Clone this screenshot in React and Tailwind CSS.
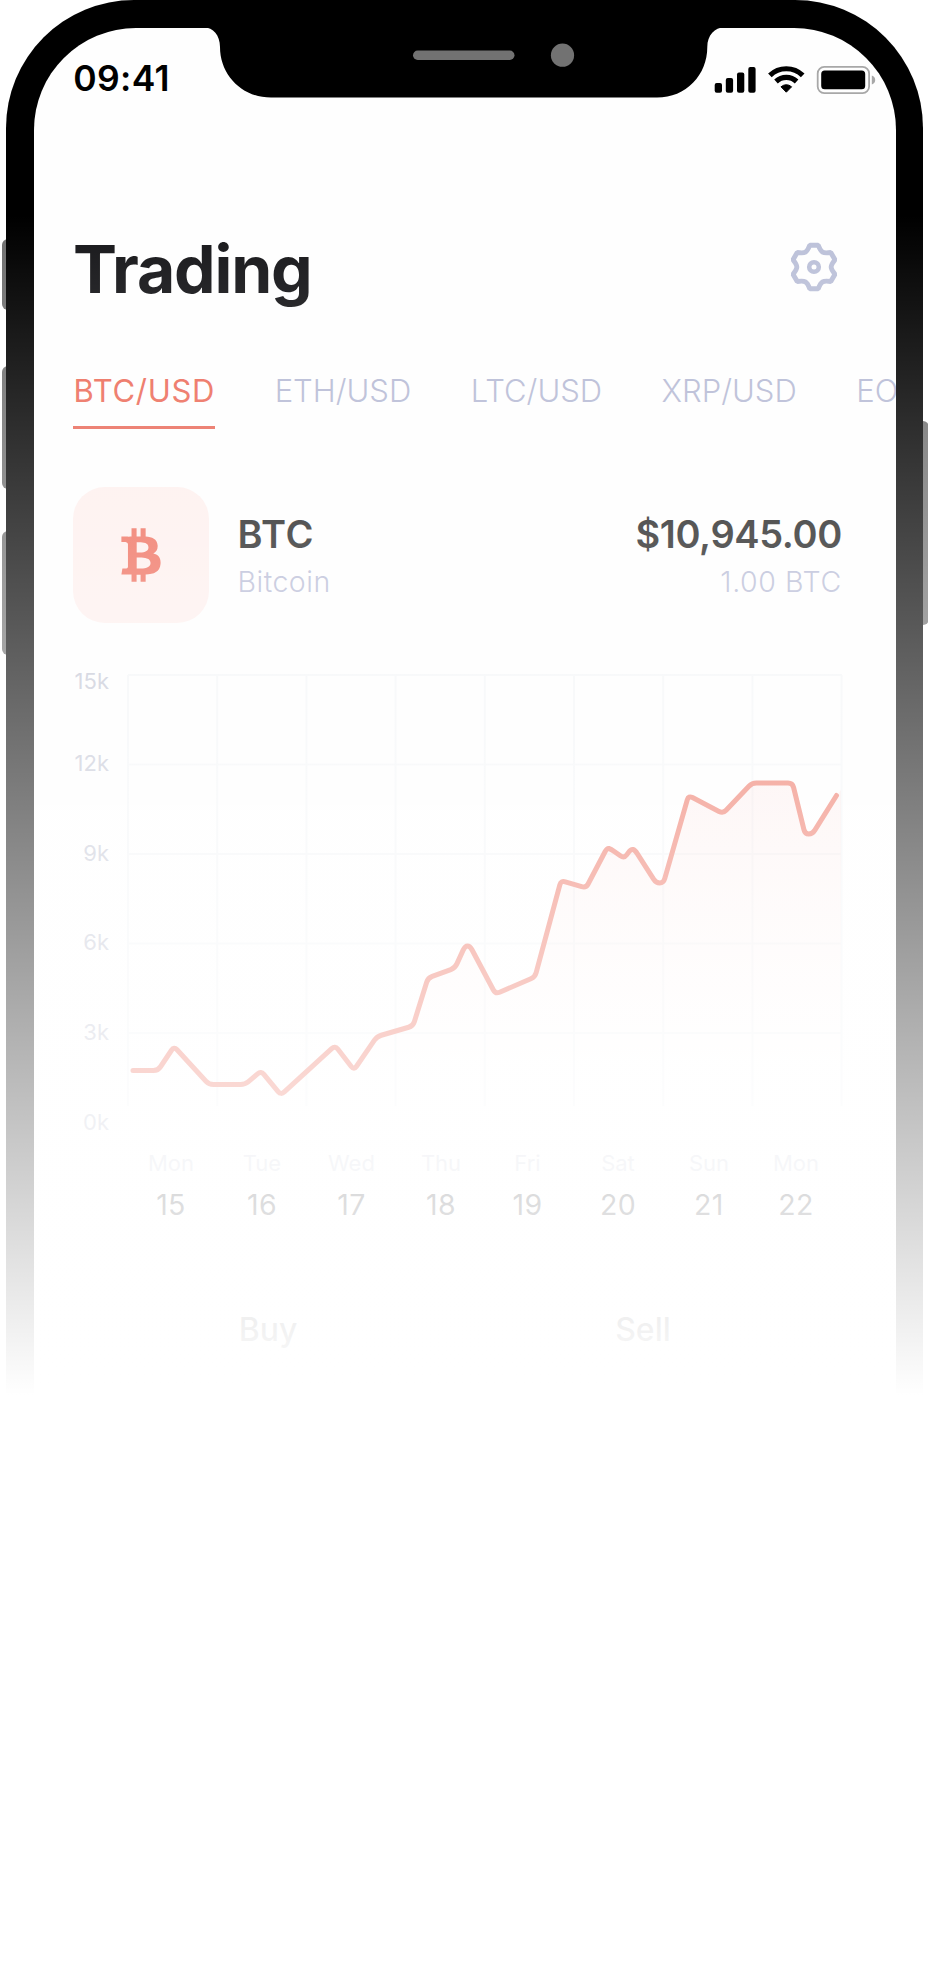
import { FaBtc } from 'react-icons/fa';

const pairs = ['BTC/USD', 'ETH/USD', 'LTC/USD', 'XRP/USD', 'EOS/USD'];

const priceLabels = ['15k', '12k', '9k', '6k', '3k', '0k'];

const days = [
  { name: 'Mon', date: 15 },
  { name: 'Tue', date: 16 },
  { name: 'Wed', date: 17 },
  { name: 'Thu', date: 18 },
  { name: 'Fri', date: 19 },
  { name: 'Sat', date: 20 },
  { name: 'Sun', date: 21 },
  { name: 'Mon', date: 22 }
];

// Price curve, in chart units
const points = [
  [6, 404.5], [31, 404.5], [47, 380.5], [82, 418.5], [118, 418.5], [134, 405],
  [154, 429], [208, 379.5], [227, 404], [250, 370.5], [286, 360], [301, 312],
  [328, 302], [338, 280], [343, 280], [368.5, 328], [408, 311], [434, 214.5],
  [459, 222], [480, 182], [484, 183], [497, 192.5], [504, 183], [508, 184],
  [529, 217], [536.5, 217], [561.5, 129.5], [596, 147.5], [625, 117], [665.5, 117],
  [678, 168], [685.5, 168], [709.5, 129.5]
];

// Line through the points with softened corners
function roundedPath(pts, radius) {
  let d = `M${pts[0][0]} ${pts[0][1]}`;
  for (let i = 1; i < pts.length - 1; i++) {
    const [x, y] = pts[i];
    const toward = ([px, py]) => {
      const len = Math.hypot(px - x, py - y);
      const k = Math.min(radius, len / 2) / len;
      return `${(x + (px - x) * k).toFixed(2)} ${(y + (py - y) * k).toFixed(2)}`;
    };
    d += ` L${toward(pts[i - 1])} Q${x} ${y} ${toward(pts[i + 1])}`;
  }
  const last = pts[pts.length - 1];
  return `${d} L${last[0]} ${last[1]}`;
}

const linePath = roundedPath(points, 4.5);

function StatusIcons() {
  return (
    <svg width="162" height="28" viewBox="0 0 162 28" fill="none">
      <g fill="#000">
        <rect x="0.7" y="17" width="7.3" height="9.8" rx="2" />
        <rect x="11.8" y="12" width="7.3" height="14.8" rx="2" />
        <rect x="23" y="6.5" width="7.3" height="20.3" rx="2" />
        <rect x="34.3" y="1" width="7.3" height="25.8" rx="2" />
        <path d="M67 20.8 Q72.3 16.6 77.6 20.8 L72.3 26.2 Z" stroke="#000" strokeWidth="1" strokeLinejoin="round" />
      </g>
      <g stroke="#000" strokeWidth="5.2">
        <path d="M55.9 9.4 A23.6 23.6 0 0 1 88.7 9.4" />
        <path d="M62 15.5 A15 15 0 0 1 82.6 15.5" />
      </g>
      <rect x="103.7" y="0.9" width="51.4" height="26.2" rx="6.5" stroke="#a8a8a8" strokeWidth="1.8" />
      <rect x="107.2" y="4.5" width="44" height="18.8" rx="3.5" fill="#000" />
      <path d="M157.8 9.5 Q161.2 10.8 161.2 14 Q161.2 17.2 157.8 18.5 Z" fill="#a8a8a8" />
    </svg>
  );
}

// Six flat teeth joined by scooped valleys
function GearIcon() {
  const rotate = (x, y, deg) => {
    const a = (deg * Math.PI) / 180;
    return `${(x * Math.cos(a) - y * Math.sin(a)).toFixed(2)} ${(x * Math.sin(a) + y * Math.cos(a)).toFixed(2)}`;
  };
  let d = '';
  for (let i = 0; i < 6; i++) {
    const deg = i * 60;
    d += `${i ? 'L' : 'M'}${rotate(-4.2, -21.8, deg)} L${rotate(4.2, -21.8, deg)} `;
    d += `C${rotate(7.2, -14.2, deg)} ${rotate(-7.2, -14.2, deg + 60)} ${rotate(-4.2, -21.8, deg + 60)} `;
  }
  return (
    <svg width="50" height="50" viewBox="-25 -25 50 50" fill="none" stroke="#bcc1d9">
      <path d={`${d}Z`} strokeWidth="4.9" strokeLinejoin="bevel" />
      <circle r="4.8" strokeWidth="4.6" />
    </svg>
  );
}

function Notch() {
  return (
    <svg
      className="absolute top-0 left-[204px]"
      width="520"
      height="98"
      viewBox="204 0 520 98"
    >
      <path
        d="M204 0 H724 V27.5 C715 27.5 707.3 35 707.3 47 C707.3 75 686 97.6 657 97.6 H271 C242 97.6 220 75 220 47 C220 35 213 27.5 204 27.5 Z"
        fill="#000"
      />
      <rect x="413" y="50.5" width="101.5" height="9.5" rx="4.7" fill="#727272" />
      <circle cx="562.5" cy="55.2" r="11.6" fill="#727272" />
    </svg>
  );
}

function Chart() {
  return (
    <svg width="720" height="460" viewBox="0 0 720 460" fill="none">
      <defs>
        <linearGradient id="area" x1="0" y1="117" x2="0" y2="400" gradientUnits="userSpaceOnUse">
          <stop offset="0" stopColor="#f06a60" stopOpacity="0.1" />
          <stop offset="1" stopColor="#f06a60" stopOpacity="0" />
        </linearGradient>
      </defs>
      <g stroke="#f3f5f7" strokeWidth="2">
        {Array.from({ length: 9 }, (_, i) => (
          <path key={i} d={`M${1 + i * 89.2} 9 V440`} />
        ))}
        {Array.from({ length: 5 }, (_, i) => (
          <path key={i} d={`M1 ${9 + i * 89.5} H715`} />
        ))}
      </g>
      <path d={`${linePath} L714 124 V457 H6 Z`} fill="url(#area)" />
      <path d={linePath} stroke="#ec6a58" strokeWidth="5" strokeLinecap="round" strokeLinejoin="round" />
    </svg>
  );
}

export default function App() {
  return (
    <div className="relative w-[928px] h-[1988px] overflow-hidden bg-white font-['Inter',sans-serif]">
      {/* Hardware buttons */}
      <div className="absolute left-[1.5px] top-[239px] w-3 h-[71px] rounded-l-md bg-[#707070]" />
      <div className="absolute left-[1.5px] top-[366px] w-3 h-[123px] rounded-l-md bg-[#707070]" />
      <div className="absolute left-[1.5px] top-[531px] w-3 h-[124px] rounded-l-md bg-[#707070]" />
      <div className="absolute left-[917px] top-[421px] w-3 h-[204px] rounded-r-md bg-[#707070]" />

      {/* Phone body */}
      <div className="relative ml-[6.3px] w-[917px] h-full px-[27.5px] pt-[27.5px] rounded-t-[128px] bg-black">
        <div className="flex flex-col h-full overflow-hidden rounded-t-[102px] bg-[#fefefe]">
          <div className="flex justify-between shrink-0 h-[205.5px] pt-[31.5px] pl-[39.5px] pr-[20px]">
            <span className="text-[35.5px] leading-[40px] font-semibold tracking-[0.3px] text-black">09:41</span>
            <div className="pt-[6.5px]">
              <StatusIcons />
            </div>
          </div>

          <div className="flex flex-col pl-[39.2px] pr-[54px]">
            <div className="flex items-center justify-between h-[72px]">
              <h1 className="text-[66px] leading-[72px] font-bold tracking-[-0.018em] text-[#17171a]">Trading</h1>
              <div className="pr-[3px] pb-[5px]">
                <GearIcon />
              </div>
            </div>

            <div className="flex gap-[59.5px] mt-[65.5px] h-[58.5px] whitespace-nowrap text-[31px] leading-[40.5px]">
              {pairs.map((pair, i) => (
                <span
                  key={pair}
                  className={i === 0
                    ? 'shrink-0 border-b-[3px] border-[#e96858] pl-[0.5px] tracking-[0.7px] text-[#ec6a58]'
                    : 'shrink-0 font-light text-[#b5b9d4]'}
                >
                  {pair}
                </span>
              ))}
            </div>

            <div className="flex mt-[58px] h-[136px]">
              <div className="flex items-center justify-center w-[136px] rounded-[32px] bg-[#feefed]">
                <FaBtc className="w-[40px] h-[54px] text-[#ee6856]" />
              </div>
              <div className="flex flex-1 justify-between pl-[28.5px] pt-[25px]">
                <div>
                  <div className="text-[38px] leading-[44px] font-semibold tracking-[0.6px] text-[#1a1a1a]">BTC</div>
                  <div className="mt-[7.5px] text-[28.5px] leading-[36px] font-light tracking-[0.5px] text-[#b5b9d4]">Bitcoin</div>
                </div>
                <div className="text-right">
                  <div className="text-[38px] leading-[44px] font-semibold tracking-[-0.4px] text-[#1a1a1a]">$10,945.00</div>
                  <div className="mt-[7.5px] text-[28.5px] leading-[36px] font-light tracking-[0.6px] text-[#b5b9d4]">1.00 BTC</div>
                </div>
              </div>
            </div>

            <div className="flex mt-[43px] h-[483px]">
              <div className="flex flex-col items-end w-[36px] pt-[0.7px] text-[22px] leading-[28px] text-[#c0c3d2]">
                {priceLabels.map((label, i) => (
                  <span key={label} className={i === 0 ? 'h-[82.5px] shrink-0' : 'h-[89.6px] shrink-0'}>{label}</span>
                ))}
              </div>
              <div className="ml-[18px] w-[714px]">
                <Chart />
              </div>
            </div>

            <div className="grid grid-cols-[90px_92px_87px_92px_81px_100px_82px_92px] ml-[53px] text-center">
              {days.map(({ name, date }) => (
                <div key={date}>
                  <div className="text-[22px] leading-[28px] text-[#d2d5e0]">{name}</div>
                  <div className="mt-[9.5px] text-[28.5px] leading-[36px] tracking-[0.4px] text-[#2e3036]">{date}</div>
                </div>
              ))}
            </div>

            <div className="grid grid-cols-[390px_360px] mt-[87.5px] text-center text-[32px] leading-[40px] font-medium text-[#16161a]">
              <span>Buy</span>
              <span>Sell</span>
            </div>
          </div>
        </div>
      </div>

      <Notch />

      {/* Fade to white */}
      <div className="absolute inset-x-0 top-[215px] bottom-0 bg-[linear-gradient(to_bottom,rgba(255,255,255,0)_0px,#fff_1180px)]" />
    </div>
  );
}
